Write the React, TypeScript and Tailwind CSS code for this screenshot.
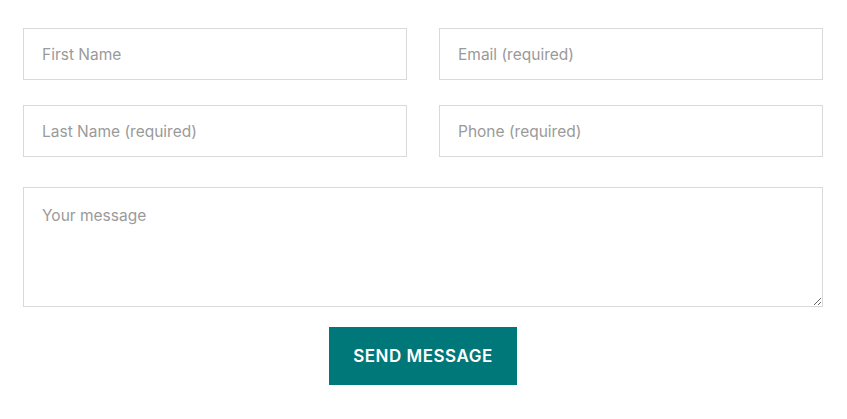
import React from "react";

export default function App() {
  const inputCls =
    "h-[52px] w-full border border-[#d9d9d9] bg-white px-[18px] text-[15.5px] text-[#333] placeholder:text-[#9a9a9a] outline-none";
  return (
    <div className="min-h-screen bg-white" style={{ fontFamily: "Inter, 'Noto Sans', sans-serif" }}>
      <form className="ml-[23px] w-[800px] pt-[28px]">
        <div className="grid grid-cols-2 gap-x-[32px] gap-y-[25px]">
          <input className={inputCls} placeholder="First Name" />
          <input className={inputCls} placeholder="Email (required)" />
          <input className={inputCls} placeholder="Last Name (required)" />
          <input className={inputCls} placeholder="Phone (required)" />
        </div>
        <textarea
          className="mt-[30px] block h-[120px] w-full border border-[#d9d9d9] bg-white px-[18px] pt-[17px] text-[15.5px] leading-[22px] text-[#333] placeholder:text-[#9a9a9a] outline-none"
          placeholder="Your message"
        />
        <div className="mt-[20px] flex justify-center">
          <button
            type="button"
            className="h-[58px] w-[188px] bg-[#00787a] pt-[2px] text-[17px] font-semibold tracking-[0.5px] text-white"
          >
            SEND MESSAGE
          </button>
        </div>
      </form>
    </div>
  );
}
